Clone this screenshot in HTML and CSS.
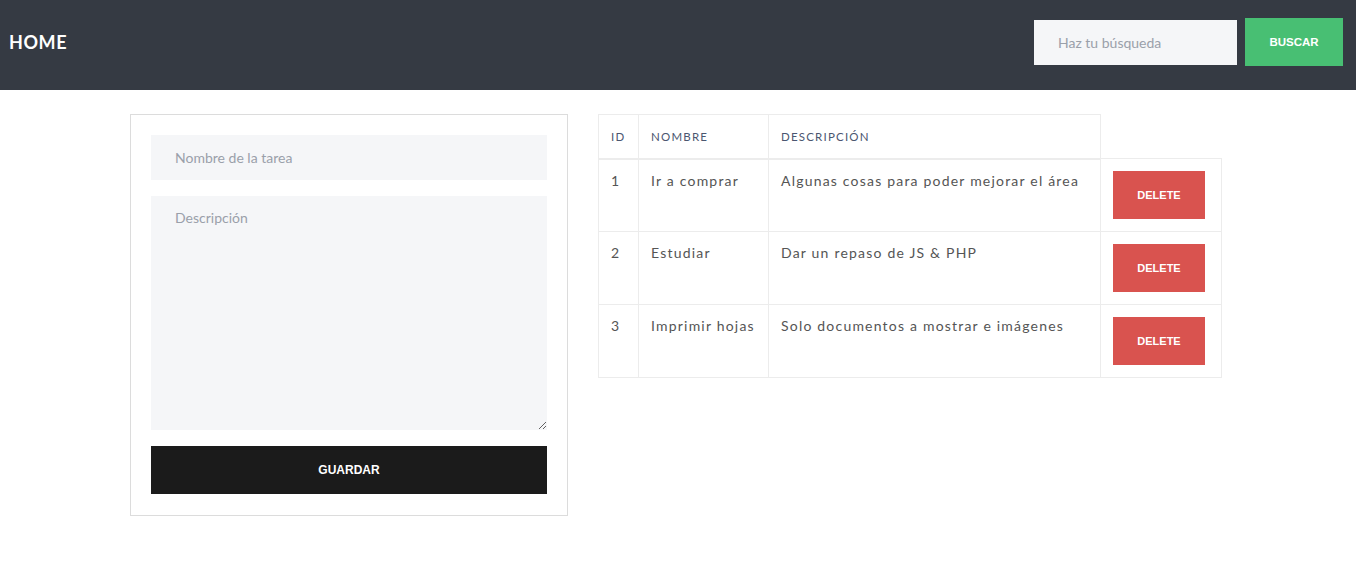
FILE: index.html
```html
<!DOCTYPE html>
<html lang="es">
<head>
<meta charset="utf-8">
<title>Tareas</title>
<link rel="stylesheet" href="styles.css">
</head>
<body>
<header class="topbar">
  <a class="brand" href="#">HOME</a>
  <form class="search">
    <input class="search-input" type="text" placeholder="Haz tu búsqueda">
    <button class="btn btn-green" type="button">BUSCAR</button>
  </form>
</header>
<main class="content">
  <section class="card">
    <form class="task-form">
      <input class="field" type="text" placeholder="Nombre de la tarea">
      <textarea class="field area" placeholder="Descripción"></textarea>
      <button class="btn btn-dark" type="button">GUARDAR</button>
    </form>
  </section>
  <section class="list">
    <table class="tasks">
      <thead>
        <tr><th class="c-id">ID</th><th class="c-name">NOMBRE</th><th class="c-desc">DESCRIPCIÓN</th></tr>
      </thead>
      <tbody>
        <tr><td>1</td><td>Ir a comprar</td><td>Algunas cosas para poder mejorar el área</td><td class="c-act"><button class="btn btn-red" type="button">DELETE</button></td></tr>
        <tr><td>2</td><td>Estudiar</td><td>Dar un repaso de JS &amp; PHP</td><td class="c-act"><button class="btn btn-red" type="button">DELETE</button></td></tr>
        <tr><td>3</td><td>Imprimir hojas</td><td>Solo documentos a mostrar e imágenes</td><td class="c-act"><button class="btn btn-red" type="button">DELETE</button></td></tr>
      </tbody>
    </table>
  </section>
</main>
</body>
</html>
```
FILE: styles.css
```css
* { box-sizing: border-box; }
body {
  margin: 0;
  font-family: "Lato", "Noto Sans", sans-serif;
  color: #555;
  background: #fff;
}
.topbar {
  height: 90px;
  background: #353a43;
  display: flex;
  align-items: center;
  justify-content: space-between;
  padding: 0 13px 6px 9px;
}
.brand {
  color: #fff;
  text-decoration: none;
  font-weight: 700;
  font-size: 18px;
  letter-spacing: 0.6px;
}
.search {
  display: flex;
  align-items: center;
  gap: 8px;
}
.search-input {
  width: 203px;
  height: 45px;
  border: 0;
  background: #f5f6f8;
  padding: 0 24px;
  font-family: "Lato", sans-serif;
  font-size: 14px;
  outline: none;
}
.search-input::placeholder, .field::placeholder { color: #9aa0aa; }
.btn {
  border: 0;
  color: #fff;
  font-family: "Liberation Sans", Arial, sans-serif;
  font-weight: 700;
  font-size: 11.5px;
  cursor: pointer;
}
.btn-green {
  width: 98px;
  height: 48px;
  background: #48bf73;
}
.content {
  display: flex;
  align-items: flex-start;
  gap: 30px;
  padding: 24px 0 0 130px;
}
.card {
  width: 438px;
  border: 1px solid #dcdcdc;
  padding: 20px 20px 21px;
}
.task-form {
  display: flex;
  flex-direction: column;
  gap: 16px;
}
.field {
  display: block;
  width: 100%;
  height: 45px;
  border: 0;
  background: #f5f6f8;
  padding: 0 24px;
  font-family: "Lato", sans-serif;
  font-size: 14px;
  color: #555;
  outline: none;
}
.area {
  height: 234px;
  padding: 13px 24px;
  resize: vertical;
}
.btn-dark {
  height: 48px;
  width: 100%;
  background: #1b1b1b;
  font-size: 12px;
}
.tasks {
  border-collapse: collapse;
  font-size: 14px;
  letter-spacing: 1.2px;
  color: #555;
}
.tasks th, .tasks td {
  border: 1px solid #ececec;
  text-align: left;
  vertical-align: top;
  padding: 12px 12px;
}
.tasks th {
  height: 44px;
  vertical-align: middle;
  font-size: 11.5px;
  font-weight: 400;
  color: #4b5670;
  border-bottom: 2px solid #ececec;
}
.tasks td { height: 73px; }
.c-id { width: 40px; }
.c-name { width: 130px; }
.c-desc { width: 332px; }
.tasks td.c-act { width: 121px; padding: 12px; }
.btn-red {
  width: 92px;
  height: 48px;
  background: #d9534f;
  font-size: 11px;
  letter-spacing: 0;
}
```
